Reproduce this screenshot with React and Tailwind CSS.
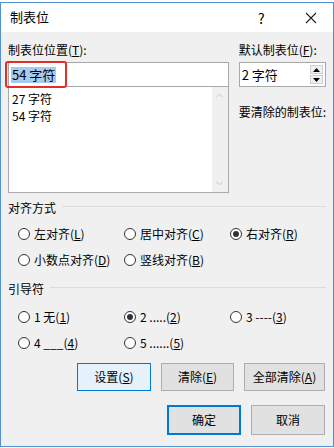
import { ChevronUp, ChevronDown } from 'lucide-react';

const font = { fontFamily: '"Noto Sans CJK SC", "Noto Sans", sans-serif' };

function Radio({ checked, children }) {
  return (
    <div className="flex items-center h-4 gap-[4px]">
      <span className="w-[12px] h-[12px] rounded-full border border-[#333] bg-white flex items-center justify-center shrink-0">
        {checked && <span className="w-[6px] h-[6px] rounded-full bg-[#333]" />}
      </span>
      <span className="leading-4 whitespace-nowrap">{children}</span>
    </div>
  );
}

function Group({ title }) {
  return (
    <div className="flex items-center h-4 gap-[6px]">
      <span className="leading-4">{title}</span>
      <div className="flex-1 h-px bg-[#dcdcdc] -mt-[4px]" />
    </div>
  );
}

function Btn({ w, primary, focus, children }) {
  let cls = 'bg-[#e1e1e1] border border-[#adadad]';
  if (focus) cls = 'bg-[#e5f1fb] border border-[#0078d7]';
  if (primary) cls = 'bg-[#e1e1e1] border-2 border-[#0078d7]';
  return (
    <div className={`${w} ${cls} flex items-center justify-center`}>{children}</div>
  );
}

export default function App() {
  return (
    <div className="w-[334px] h-[448px] bg-white pt-[2px] text-[12px] text-black" style={font}>
      <div className="h-[445px] border border-[#5290cf] flex flex-col">
        {/* Title bar */}
        <div className="h-[29px] bg-white flex items-center pl-[9px] shrink-0">
          <span className="text-[13px] leading-4 flex-1 -mt-[1px]">制表位</span>
          <span className="text-[14px] leading-4 w-[12px] mr-[35px]">?</span>
          <svg width="12" height="12" viewBox="0 0 12 12" className="mr-[16px]">
            <path d="M1 1 L11 11 M11 1 L1 11" stroke="#222" strokeWidth="1.1" fill="none" />
          </svg>
        </div>

        {/* Body */}
        <div className="flex-1 bg-[#f0f0f0] pl-[7px] pr-[7px] pt-[10px] flex flex-col">
          <div className="flex gap-[10px]">
            <div className="w-[221px] flex flex-col">
              <div className="h-4 leading-4">制表位位置(<u>T</u>):</div>
              <div className="relative mt-[4px] h-[25px] bg-white border border-[#a9a9a9] flex items-center pl-[2px]">
                <span className="bg-[#a6cbef] leading-[16px] px-[1px] text-[13px]">54 字符</span>
                <div className="absolute -left-[4px] -top-[2px] w-[62px] h-[27px] border-2 border-[#e0302a] rounded-[3px]" />
              </div>
              <div className="h-[106px] bg-white border border-t-0 border-[#a9a9a9] flex">
                <div className="flex-1 pl-[3px] pt-[3px] text-[12px]">
                  <div className="leading-[17px]">27 字符</div>
                  <div className="leading-[17px]">54 字符</div>
                </div>
                <div className="w-[16px] bg-[#f0f0f0] flex flex-col items-center justify-between py-[3px]">
                  <ChevronUp size={11} strokeWidth={2} color="#c2c2c2" />
                  <ChevronDown size={11} strokeWidth={2} color="#c2c2c2" />
                </div>
              </div>
            </div>
            <div className="flex-1 flex flex-col">
              <div className="h-4 leading-4 whitespace-nowrap">默认制表位(<u>F</u>):</div>
              <div className="mt-[4px] h-[25px] bg-white border border-[#a9a9a9] flex items-center pl-[2px] pr-[2px]">
                <span className="flex-1 text-[13px] leading-4">2 字符</span>
                <div className="flex flex-col gap-[1px]">
                  <div className="w-[13px] h-[9px] bg-[#f0f0f0] border border-[#cfcfcf] flex items-center justify-center">
                    <svg width="7" height="4" viewBox="0 0 7 4"><path d="M0 4 L3.5 0 L7 4 Z" fill="#000" /></svg>
                  </div>
                  <div className="w-[13px] h-[9px] bg-[#f0f0f0] border border-[#cfcfcf] flex items-center justify-center">
                    <svg width="7" height="4" viewBox="0 0 7 4"><path d="M0 0 L3.5 4 L7 0 Z" fill="#000" /></svg>
                  </div>
                </div>
              </div>
              <div className="mt-[17px] h-4 leading-4 whitespace-nowrap">要清除的制表位:</div>
            </div>
          </div>

          <div className="mt-[7px]">
            <Group title="对齐方式" />
          </div>
          <div className="grid grid-cols-[106px_106px_1fr] gap-y-[10px] pl-[10px] mt-[10px]">
            <Radio>左对齐(<u>L</u>)</Radio>
            <Radio>居中对齐(<u>C</u>)</Radio>
            <Radio checked>右对齐(<u>R</u>)</Radio>
            <Radio>小数点对齐(<u>D</u>)</Radio>
            <Radio>竖线对齐(<u>B</u>)</Radio>
          </div>

          <div className="mt-[13px]">
            <Group title="引导符" />
          </div>
          <div className="grid grid-cols-[106px_106px_1fr] gap-y-[10px] pl-[10px] mt-[12px]">
            <Radio>1 无(<u>1</u>)</Radio>
            <Radio checked>2 .....(<u>2</u>)</Radio>
            <Radio>3 ----(<u>3</u>)</Radio>
            <Radio>4 ___(<u>4</u>)</Radio>
            <Radio>5 ......(<u>5</u>)</Radio>
          </div>

          <div className="mt-[12px] h-[28px] flex justify-end gap-[10px] pr-px">
            <Btn w="w-[74px]" focus>设置(<u>S</u>)</Btn>
            <Btn w="w-[73px]">清除(<u>E</u>)</Btn>
            <Btn w="w-[81px]">全部清除(<u>A</u>)</Btn>
          </div>

          <div className="mt-[14px] h-[30px] flex justify-end gap-[10px] pr-px">
            <Btn w="w-[74px]" primary>确定</Btn>
            <Btn w="w-[74px]">取消</Btn>
          </div>
        </div>
      </div>
    </div>
  );
}
